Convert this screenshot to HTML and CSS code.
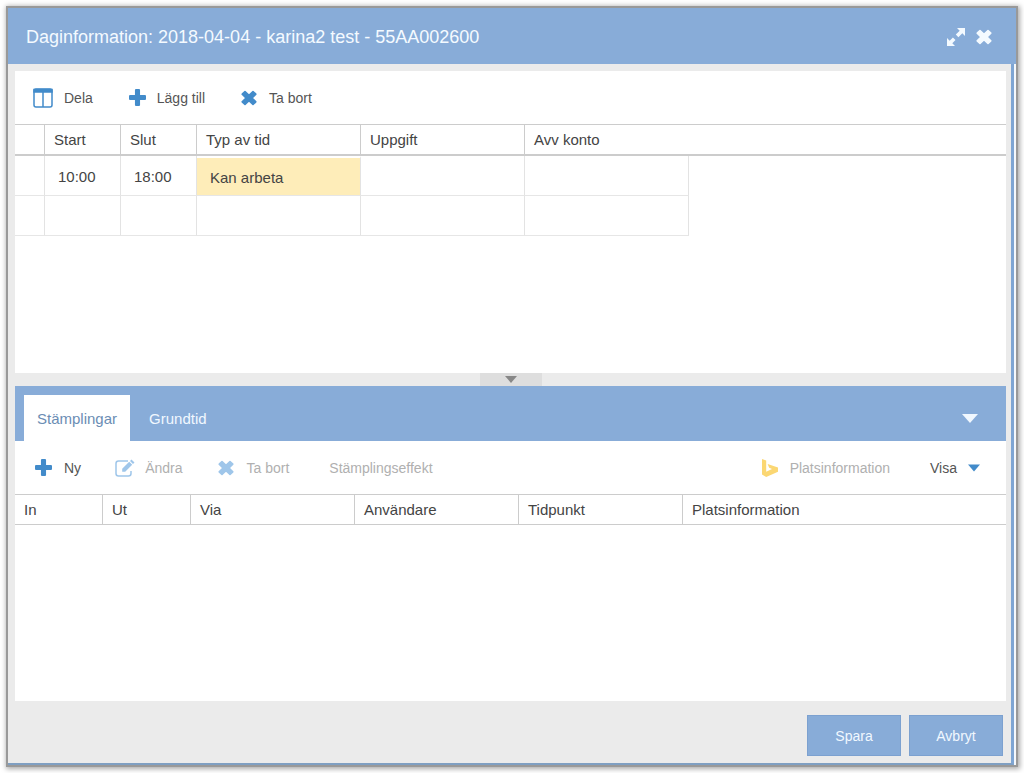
FILE: index.html
```html
<!DOCTYPE html>
<html lang="sv">
<head>
<meta charset="utf-8">
<title>Daginformation</title>
<link rel="stylesheet" href="styles.css">
</head>
<body>
<svg class="sprite" aria-hidden="true">
  <symbol id="plus" viewBox="0 0 16 16"><path d="M6.6 0h2.8q1 0 1 1v4.6H15q1 0 1 1v2.8q0 1-1 1h-4.6V15q0 1-1 1H6.600q-1 0-1-1v-4.600H1q-1 0-1-1V6.600q0-1 1-1h4.600V1q0-1 1-1z"/></symbol>
  <symbol id="cross" viewBox="0 0 16 16"><path d="M4 1.500 8 5.300l4-3.800L14.800 4.200 11 8l3.800 3.800L12 14.500 8 10.700l-4 3.800L1.200 11.800 5 8 1.200 4.200z" stroke="currentColor" stroke-width="1.600" stroke-linejoin="round"/></symbol>
</svg>
<main class="window">
  <header class="titlebar">
    <h1 class="title">Daginformation: 2018-04-04 - karina2 test - 55AA002600</h1>
    <button class="icon-button" aria-label="Maximera">
      <svg class="icon-expand" viewBox="0 0 20 20"><path d="M11 1h8v8l-2.700-2.700-3.900 3.900-2.600-2.600 3.900-3.900zM1 19v-8l2.700 2.700 3.200-3.200 2.600 2.600-3.200 3.200L9 19z"/></svg>
    </button>
    <button class="icon-button" aria-label="Stäng">
      <svg class="icon-close"><use href="#cross"/></svg>
    </button>
  </header>
  <div class="content">
    <section class="panel panel-top">
      <div class="toolbar">
        <button class="tool"><svg class="icon-split" viewBox="0 0 20 20"><rect x="1" y="1" width="18" height="18" rx="2"/><path class="split-head" d="M1 1.500h18V4H1z"/><path d="M10 3v16"/></svg>Dela</button>
        <button class="tool tool-add"><svg class="icon"><use href="#plus"/></svg>Lägg till</button>
        <button class="tool tool-remove"><svg class="icon icon-cross"><use href="#cross"/></svg>Ta bort</button>
      </div>
      <table class="grid times">
        <colgroup><col class="col-mark"><col class="col-time"><col class="col-time"><col class="col-wide"><col class="col-wide"><col class="col-wide"><col></colgroup>
        <thead><tr><th></th><th>Start</th><th>Slut</th><th>Typ av tid</th><th>Uppgift</th><th>Avv konto</th><th></th></tr></thead>
        <tbody>
          <tr><td></td><td>10:00</td><td>18:00</td><td class="selected">Kan arbeta</td><td></td><td></td><td class="filler"></td></tr>
          <tr><td></td><td></td><td></td><td></td><td></td><td></td><td class="filler"></td></tr>
        </tbody>
      </table>
    </section>
    <div class="splitter"><button class="handle" aria-label="Fäll ihop"><svg class="caret-small" viewBox="0 0 12 7"><path d="M0 0h12L6 7z"/></svg></button></div>
    <section class="panel panel-bottom">
      <div class="tabs">
        <div class="tab-list" role="tablist">
          <button class="tab active" role="tab" aria-selected="true">Stämplingar</button>
          <button class="tab" role="tab" aria-selected="false">Grundtid</button>
        </div>
        <button class="icon-button" aria-label="Visa flikar"><svg class="caret-tabs" viewBox="0 0 16 9"><path d="M0 0h16L8 9z"/></svg></button>
      </div>
      <div class="toolbar">
        <button class="tool"><svg class="icon icon-new"><use href="#plus"/></svg>Ny</button>
        <button class="tool tool-edit" disabled><svg class="icon-edit" viewBox="0 0 20 18"><path class="edit-box" d="M13 2H3.500Q1 2 1 4.500v10Q1 17 3.500 17h10q2.500 0 2.500-2.500V12"/><path d="M16.500.5 19.500 3.500 18 5 15 2zM14.200 2.800l3 3-7 7H7.200v-3z"/></svg>Ändra</button>
        <button class="tool tool-delete" disabled><svg class="icon icon-cross"><use href="#cross"/></svg>Ta bort</button>
        <button class="tool tool-effect" disabled>Stämplingseffekt</button>
        <button class="tool tool-place" disabled><svg class="icon-bing" viewBox="0 0 16 18"><path d="M0 0 4.200 1.500v11.200L10 10 7.200 8.700 5.600 4.900 16 8.500v4.300L4.200 18 0 15.500z"/></svg>Platsinformation</button>
        <button class="tool tool-show">Visa<svg class="caret-show" viewBox="0 0 12 7"><path d="M0 0h12L6 7z"/></svg></button>
      </div>
      <table class="grid stamps">
        <colgroup><col class="col-stamp"><col class="col-stamp"><col class="col-wide"><col class="col-wide"><col class="col-wide"><col></colgroup>
        <thead><tr><th>In</th><th>Ut</th><th>Via</th><th>Användare</th><th>Tidpunkt</th><th>Platsinformation</th></tr></thead>
      </table>
    </section>
    <footer class="footer">
      <button class="action">Spara</button>
      <button class="action">Avbryt</button>
    </footer>
  </div>
</main>
</body>
</html>
```
FILE: styles.css
```css
* { box-sizing: border-box; }
body {
  margin: 0;
  padding: 8px;
  min-height: 100vh;
  display: flex;
  background: #fff;
  color: #444;
  font-family: "Liberation Sans", Arial, sans-serif;
  font-size: 15px;
}
button {
  margin: 0;
  padding: 0;
  border: 0;
  background: none;
  color: inherit;
  font: inherit;
}
svg { display: block; fill: currentColor; }
.sprite { position: absolute; width: 0; height: 0; }
.window {
  flex: 1;
  display: flex;
  flex-direction: column;
  border-right: 2px solid #f4f8fc;
  box-shadow: 0 0 0 2px #999, 1px 1px 5px 3px #aaa;
}
.titlebar {
  display: flex;
  align-items: center;
  gap: 10px;
  height: 56px;
  padding: 2px 24px 0 18px;
  margin-right: -2px;
  background: #88acd8;
  color: #f4faff;
}
.title {
  flex: 1;
  margin: 0;
  font-size: 18px;
  font-weight: 400;
}
.icon-expand { width: 20px; height: 20px; }
.icon-close { width: 16px; height: 16px; }
.content {
  flex: 1;
  display: flex;
  flex-direction: column;
  padding: 7px 5px 0 7px;
  border-right: 3px solid #7ea5d3;
  border-bottom: 2px solid #7f9fc2;
  background: #ebebeb;
}
.panel { background: #fff; }
.panel-top { flex: 302 0 0; }
.panel-bottom { flex: 315 0 0; }
.toolbar {
  display: flex;
  align-items: center;
  height: 53px;
  padding: 0 26px 0 18px;
}
.tool {
  display: flex;
  align-items: center;
  gap: 11px;
  color: #555;
  font-size: 14px;
  line-height: 20px;
}
.tool svg { color: #428bca; }
.tool:disabled { color: #b0b0b0; }
.tool:disabled svg { color: #9fc6ea; }
.icon { width: 17px; height: 17px; }
.icon-cross { width: 16px; height: 16px; }
.icon-new { margin: 0 1px 0 2px; }
.icon-split { width: 20px; height: 20px; fill: none; stroke: currentColor; stroke-width: 1.5; }
.split-head { fill: currentColor; }
.tool-add { margin-left: 36px; }
.tool-remove, .tool-delete { margin-left: 36px; }
.tool-edit { margin-left: 34px; gap: 10px; }
.icon-edit { width: 20px; height: 18px; }
.edit-box { fill: none; stroke: currentColor; stroke-width: 1.5; }
.tool-remove, .tool-delete, .tool-place { gap: 12px; }
.tool-effect { margin-left: 40px; }
.tool-place { margin-left: auto; }
.tool:disabled .icon-bing { width: 16px; height: 18px; color: #fbd773; }
.tool-show { margin-left: 40px; }
.caret-show { width: 12px; height: 8px; }
.grid {
  width: 100%;
  table-layout: fixed;
  border-collapse: separate;
  border-spacing: 0;
}
.col-mark { width: 30px; }
.col-time { width: 76px; }
.col-wide { width: 164px; }
.col-stamp { width: 88px; }
.grid th {
  height: 31px;
  padding: 0 0 0 9px;
  border-top: 1px solid #ccc;
  border-right: 1px solid #ccc;
  border-bottom: 1px solid #ccc;
  font-weight: 400;
  text-align: left;
}
.grid th:last-child { border-right: 0; }
.times th { height: 32px; border-bottom-width: 2px; }
.grid .filler { border: 0; }
.times th:nth-child(6) { border-right: 0; }
.grid td:not(.filler) {
  height: 40px;
  padding: 2px 13px 0;
  border-right: 1px solid #e3e3e3;
  border-bottom: 1px solid #e6e6e6;
}
.grid .selected {
  border-top: 2px solid #fff;
  background: #feedb9;
}
.splitter {
  display: flex;
  justify-content: center;
  height: 13px;
}
.handle {
  display: flex;
  align-items: center;
  justify-content: center;
  width: 62px;
  background: #dedede;
  color: #888;
}
.caret-small { width: 12px; height: 7px; }
.tabs {
  display: flex;
  align-items: center;
  justify-content: space-between;
  height: 55px;
  padding: 0 28px 0 9px;
  background: #88acd8;
  color: #f1f8ff;
}
.tab-list { display: flex; align-self: flex-end; gap: 6px; }
.tab { height: 46px; padding: 0 13px; }
.tab.active { background: #fff; color: #6b8db4; }
.caret-tabs { width: 16px; height: 9px; margin-top: 10px; }
.footer {
  display: flex;
  justify-content: flex-end;
  gap: 8px;
  height: 62px;
  padding: 14px 3px 7px;
}
.action {
  width: 94px;
  border: 1px solid #7ca1d0;
  background: #88acd8;
  color: #f1f8ff;
  font-size: 14px;
}
```
